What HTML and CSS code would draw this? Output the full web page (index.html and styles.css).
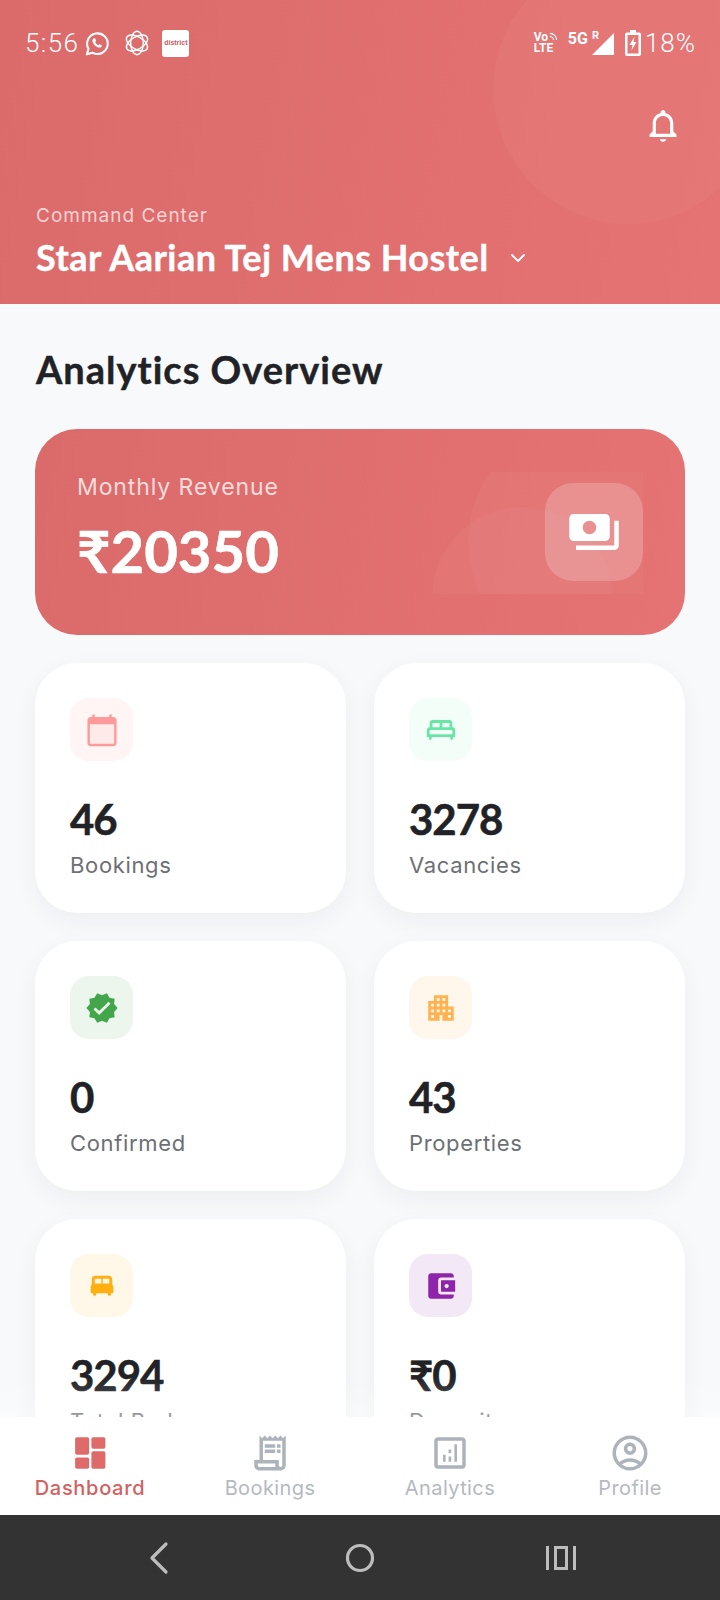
FILE: index.html
```html
<!DOCTYPE html>
<html lang="en">
<head>
    <meta charset="UTF-8">
    <meta name="viewport" content="width=device-width, initial-scale=1.0">
    <title>Dashboard</title>
    <link rel="stylesheet" href="styles.css">
</head>
<body>
    <div class="phone">
        <!-- Header -->
        <header class="header">
            <div class="header-circle"></div>
            <div class="status-bar">
                <div class="status-left">
                    <span class="time">5:56</span>
                    <svg class="ic-whatsapp" viewBox="0 0 24 24"><path d="M1.8 22.4l1.5-5.4a9.9 9.9 0 1 1 3.8 3.8z" fill="none" stroke="#fff" stroke-width="2" stroke-linejoin="round"/><path d="M8.9 6.9c-.4 0-1 .3-1.3.8-.6.9-.6 2.200.1 3.500 1 1.900 2.500 3.400 4.400 4.300 1.300.6 2.700.5 3.500-.2.500-.4.700-1 .7-1.500l-2.300-1.200-1.100 1.100c-1.400-.5-2.600-1.700-3.200-3.100l1-1.100-1-2.600z" fill="#fff"/></svg>
                    <svg class="ic-knot" viewBox="0 0 24 24" fill="none" stroke="#fff" stroke-width="1.300"><ellipse cx="12" cy="12" rx="5.800" ry="10.800"/><ellipse cx="12" cy="12" rx="5.800" ry="10.800" transform="rotate(60 12 12)"/><ellipse cx="12" cy="12" rx="5.800" ry="10.800" transform="rotate(120 12 12)"/></svg>
                    <span class="app-tile">district</span>
                </div>
                <div class="status-right">
                    <span class="volte">Vo<svg class="ic-arcs" viewBox="0 0 10 10"><path d="M1 1.500a7.500 7.500 0 0 1 7.500 7.500M1 5a4 4 0 0 1 4 4" fill="none" stroke="#fff" stroke-width="1.300"/></svg><br>LTE</span>
                    <span class="net">5G</span>
                    <span class="roam">R</span>
                    <svg class="ic-signal" viewBox="0 0 22 22"><path d="M22 0v22H0z" fill="#fff"/></svg>
                    <svg class="ic-battery" viewBox="0 0 16 26"><path d="M5 0h6v2.500h3a2 2 0 0 1 2 2V24a2 2 0 0 1-2 2H2a2 2 0 0 1-2-2V4.500a2 2 0 0 1 2-2h3zM2.500 5v18.500h11V5z" fill="#fff" fill-rule="evenodd"/><path d="M9.500 6.500L4.500 15h3l-1 5.500 5-8.500h-3z" fill="#fff"/></svg>
                    <span class="battery-pct">18%</span>
                </div>
            </div>
            <div class="bell-row">
                <svg class="ic-bell" viewBox="0 0 24 24"><path d="M12 22.500c1.100 0 2-.7 2-1.500h-4c0 .8.900 1.500 2 1.500zm6.500-6.500v-5c0-3.100-1.700-5.700-5-6.400V4c0-.8-.7-1.500-1.500-1.500s-1.500.7-1.500 1.500v.6c-3.300.7-5 3.300-5 6.400v5L3.500 18v1.500h17V18zm-2 1.500h-9V11c0-2.600 1.800-4.700 4.500-4.700s4.500 2.100 4.500 4.700z" fill="#fff"/></svg>
            </div>
            <div class="header-sub">Command Center</div>
            <div class="header-title-row">
                <h1 class="header-title">Star Aarian Tej Mens Hostel</h1>
                <svg class="ic-chevron" viewBox="0 0 16 10"><path d="M2 2l6 6 6-6" fill="none" stroke="#fff" stroke-width="1.800" stroke-linecap="round" stroke-linejoin="round"/></svg>
            </div>
        </header>

        <!-- Contenido -->
        <main class="content">
            <h2 class="section-title">Analytics Overview</h2>

            <div class="revenue-card">
                <div class="revenue-text">
                    <div class="revenue-label">Monthly Revenue</div>
                    <div class="revenue-value">₹20350</div>
                </div>
                <div class="revenue-deco">
                    <div class="deco-circle deco-one"></div>
                    <div class="deco-circle deco-two"></div>
                </div>
                <div class="revenue-icon">
                    <svg viewBox="0 0 24 24"><path d="M19 14V6c0-1.100-.9-2-2-2H3c-1.100 0-2 .9-2 2v8c0 1.100.9 2 2 2h14c1.100 0 2-.9 2-2zm-9-1c-1.660 0-3-1.340-3-3s1.340-3 3-3 3 1.340 3 3-1.340 3-3 3zm13-6v11c0 1.100-.9 2-2 2H4v-2h17V7h2z" fill="#fff"/></svg>
                </div>
            </div>

            <div class="stats-grid">
                <div class="stat-card">
                    <div class="stat-icon bg-red">
                        <svg viewBox="1.500 1.500 21 21"><path d="M4 8h16v12.500H4z" fill="#ff9a9a" opacity=".12"/><path d="M19 4h-1V2.500h-1.500V4h-9V2.500H6V4H5c-1.100 0-2 .9-2 2v14c0 1.100.9 2 2 2h14c1.100 0 2-.9 2-2V6c0-1.100-.9-2-2-2zm.500 16.500h-15V8.500h15z" fill="#ff9a9a"/></svg>
                    </div>
                    <div class="stat-value">46</div>
                    <div class="stat-label">Bookings</div>
                </div>
                <div class="stat-card">
                    <div class="stat-icon bg-green">
                        <svg viewBox="0 0 24 24"><path d="M20 10V7c0-1.100-.9-2-2-2H6c-1.100 0-2 .9-2 2v3c-1.100 0-2 .9-2 2v5h1.330L4 19h1l.67-2h12.670l.66 2h1l.67-2H22v-5c0-1.100-.9-2-2-2zm-9 0H6V7h5v3zm7 0h-5V7h5v3zM4 12h16v3H4v-3z" fill="#69e6a6"/></svg>
                    </div>
                    <div class="stat-value">3278</div>
                    <div class="stat-label">Vacancies</div>
                </div>
                <div class="stat-card">
                    <div class="stat-icon bg-mint">
                        <svg viewBox="0 0 24 24"><path d="M23 12l-2.440-2.780.34-3.680-3.610-.82-1.890-3.180L12 3 8.600 1.540 6.710 4.720l-3.610.81.34 3.680L1 12l2.440 2.780-.34 3.690 3.610.82 1.890 3.180L12 21l3.400 1.460 1.890-3.180 3.610-.82-.34-3.680L23 12zm-13 5l-4-4 1.410-1.410L10 14.170l6.590-6.590L18 9l-8 8z" fill="#43a64a"/></svg>
                    </div>
                    <div class="stat-value">0</div>
                    <div class="stat-label">Confirmed</div>
                </div>
                <div class="stat-card">
                    <div class="stat-icon bg-orange">
                        <svg viewBox="0 0 24 24"><path d="M17 11V3H7v4H3v14h8v-4h2v4h8V11h-4zM7 19H5v-2h2v2zm0-4H5v-2h2v2zm0-4H5V9h2v2zm4 4H9v-2h2v2zm0-4H9V9h2v2zm0-4H9V5h2v2zm4 8h-2v-2h2v2zm0-4h-2V9h2v2zm0-4h-2V5h2v2zm4 12h-2v-2h2v2zm0-4h-2v-2h2v2z" fill="#ffb24d"/></svg>
                    </div>
                    <div class="stat-value">43</div>
                    <div class="stat-label">Properties</div>
                </div>
                <div class="stat-card">
                    <div class="stat-icon bg-yellow">
                        <svg viewBox="-3 -3 30 30"><path d="M21 10.800V6c0-1.650-1.350-3-3-3H6C4.350 3 3 4.350 3 6v4.800c-.6.5-1 1.300-1 2.200v4.500c0 .6.400 1 1 1h1l.5 2h2l.5-2h10l.5 2h2l.5-2h1c.6 0 1-.4 1-1V13c0-.9-.4-1.700-1-2.200zM6.500 5.500h4c.5 0 .9.400.9.900v3.400H5.600V6.400c0-.5.400-.9.900-.9zm7 0h4c.5 0 .9.400.9.900v3.400h-5.800V6.400c0-.5.400-.9.900-.9z" fill="#ffb010" fill-rule="evenodd"/></svg>
                    </div>
                    <div class="stat-value">3294</div>
                    <div class="stat-label">Total Beds</div>
                </div>
                <div class="stat-card">
                    <div class="stat-icon bg-purple">
                        <svg viewBox="0 0 24 24"><path d="M21 18v1c0 1.100-.9 2-2 2H5c-1.110 0-2-.9-2-2V5c0-1.100.89-2 2-2h14c1.100 0 2 .9 2 2v1h-9c-1.110 0-2 .9-2 2v8c0 1.100.89 2 2 2h9zm-9-2h10V8H12v8zm4-2.500c-.83 0-1.500-.67-1.500-1.500s.67-1.500 1.500-1.500 1.500.67 1.500 1.500-.67 1.500-1.500 1.500z" fill="#8e24aa"/></svg>
                    </div>
                    <div class="stat-value">₹0</div>
                    <div class="stat-label">Deposit</div>
                </div>
            </div>
            <div class="content-fade"></div>
        </main>

        <!-- Barra inferior -->
        <nav class="tabbar">
            <div class="tab active">
                <svg viewBox="0 0 24 24"><rect x="3.500" y="3" width="8" height="10" rx="1"/><rect x="3.500" y="14.500" width="8" height="6.500" rx="1"/><rect x="12.800" y="3" width="8" height="6.500" rx="1"/><rect x="12.800" y="11" width="8" height="10" rx="1"/></svg>
                <span>Dashboard</span>
            </div>
            <div class="tab">
                <svg viewBox="0 0 24 24"><path d="M19.500 3.500L18 2l-1.500 1.500L15 2l-1.500 1.500L12 2l-1.500 1.500L9 2 7.500 3.500 6 2v14H3v3c0 1.660 1.340 3 3 3h12c1.660 0 3-1.340 3-3V2l-1.500 1.500zM15 20H6c-.55 0-1-.45-1-1v-1h10v2zm4-1c0 .55-.45 1-1 1s-1-.45-1-1v-3H8V5h11v14z"/><path d="M9 7h6v2H9zm7 0h2v2h-2zm-7 3h6v2H9zm7 0h2v2h-2z"/></svg>
                <span>Bookings</span>
            </div>
            <div class="tab">
                <svg viewBox="0 0 24 24"><path d="M19 3H5c-1.100 0-2 .9-2 2v14c0 1.100.9 2 2 2h14c1.100 0 2-.9 2-2V5c0-1.100-.9-2-2-2zm0 16H5V5h14v14z"/><path d="M8 13h1.500v4H8zm6.500-6H16v10h-1.500zm-3.300 7h1.500v3h-1.500zm0-4h1.500v2h-1.500z"/></svg>
                <span>Analytics</span>
            </div>
            <div class="tab">
                <svg viewBox="0 0 24 24"><path d="M12 2C6.480 2 2 6.480 2 12s4.480 10 10 10 10-4.480 10-10S17.520 2 12 2zM7.350 18.500C8.660 17.560 10.260 17 12 17s3.340.56 4.650 1.500c-1.310.94-2.910 1.500-4.650 1.500s-3.340-.56-4.650-1.500zm10.790-1.380C16.450 15.800 14.320 15 12 15s-4.450.8-6.140 2.120C4.700 15.730 4 13.950 4 12c0-4.420 3.580-8 8-8s8 3.580 8 8c0 1.950-.7 3.730-1.860 5.120z"/><path d="M12 6c-1.930 0-3.500 1.570-3.500 3.500S10.070 13 12 13s3.500-1.570 3.500-3.500S13.930 6 12 6zm0 5c-.83 0-1.500-.67-1.500-1.500S11.170 8 12 8s1.500.67 1.500 1.500S12.830 11 12 11z"/></svg>
                <span>Profile</span>
            </div>
        </nav>

        <!-- Navegación del sistema -->
        <div class="sysnav">
            <svg class="sys-back" viewBox="0 0 20 36"><path d="M17 4L3 18l14 14" fill="none" stroke="#bdbdbd" stroke-width="3.200" stroke-linecap="round" stroke-linejoin="round"/></svg>
            <svg class="sys-home" viewBox="0 0 30 30"><circle cx="15" cy="15" r="12.500" fill="none" stroke="#bdbdbd" stroke-width="3.200"/></svg>
            <svg class="sys-recent" viewBox="0 0 30 26"><path d="M1.500 1v24M28.500 1v24" stroke="#bdbdbd" stroke-width="3"/><rect x="9.500" y="2.500" width="11" height="21" fill="none" stroke="#bdbdbd" stroke-width="3"/></svg>
        </div>
    </div>
</body>
</html>
```

FILE: styles.css
```css
* {
    box-sizing: border-box;
}

body {
    margin: 0;
    font-family: 'Lato', sans-serif;
    background-color: #f8f9fb;
}

.phone {
    width: 720px;
    height: 1600px;
    display: flex;
    flex-direction: column;
    overflow: hidden;
}

/* Header */
.header {
    position: relative;
    height: 304px;
    flex-shrink: 0;
    overflow: hidden;
    padding: 0 24px 0 36px;
    background: linear-gradient(100deg, #db6a6a, #e57373);
    color: #fff;
}

.header-circle {
    position: absolute;
    left: 493px;
    top: -46px;
    width: 270px;
    height: 270px;
    border-radius: 50%;
    background-color: rgba(255, 255, 255, 0.035);
}

.status-bar {
    position: relative;
    display: flex;
    justify-content: space-between;
    align-items: center;
    height: 30px;
    margin: 28px 0 0 -11px;
}

.status-left, .status-right {
    display: flex;
    align-items: center;
}

.time {
    font-family: 'Roboto', sans-serif;
    font-size: 26px;
    font-weight: 300;
    letter-spacing: 1.4px;
    color: #fff;
}

.ic-whatsapp {
    width: 25px;
    height: 25px;
    margin-left: 6px;
}

.ic-knot {
    width: 26px;
    height: 26px;
    margin-left: 14px;
}

.app-tile {
    width: 27px;
    height: 27px;
    margin-left: 12px;
    border-radius: 3px;
    background-color: #fff;
    color: #d9575f;
    font-family: 'Liberation Sans', sans-serif;
    font-size: 7px;
    font-weight: 700;
    line-height: 25px;
    text-align: center;
}

.volte {
    font-family: 'Roboto', sans-serif;
    font-size: 12px;
    font-weight: 700;
    line-height: 11px;
    width: 34px;
}

.ic-arcs {
    width: 9px;
    height: 9px;
    margin-left: 1px;
}

.net {
    font-family: 'Roboto', sans-serif;
    font-size: 16px;
    font-weight: 700;
    margin-top: -9px;
}

.roam {
    font-family: 'Roboto', sans-serif;
    font-size: 11px;
    font-weight: 700;
    margin: -16px -7px 0 4px;
}

.ic-signal {
    width: 22px;
    height: 22px;
    margin-top: 1px;
}

.ic-battery {
    width: 16px;
    height: 26px;
    margin-left: 11px;
}

.battery-pct {
    font-family: 'Roboto', sans-serif;
    font-size: 26px;
    font-weight: 300;
    letter-spacing: 1px;
    color: #fff;
    margin-left: 4px;
}

.bell-row {
    position: relative;
    display: flex;
    justify-content: flex-end;
    margin-top: 48px;
}

.ic-bell {
    width: 38px;
    height: 38px;
    margin-right: 14px;
}

.header-sub {
    margin-top: 60px;
    font-family: 'Inter', sans-serif;
    font-size: 19px;
    line-height: 24px;
    letter-spacing: 1px;
    color: #f9d3d3;
}

.header-title-row {
    display: flex;
    align-items: center;
    margin-top: 7px;
}

.header-title {
    margin: 0;
    font-size: 36px;
    line-height: 44px;
    font-weight: 700;
    letter-spacing: 0.47px;
    -webkit-text-stroke: 0.4px #fff;
}

.ic-chevron {
    width: 16px;
    height: 10px;
    margin: 2px 0 0 21px;
}

/* Contenido */
.content {
    position: relative;
    flex: 1;
    min-height: 0;
    overflow: hidden;
    padding: 42px 35px 0;
    background-color: #f8f9fb;
}

.section-title {
    margin: 0 0 37px 1px;
    font-size: 38px;
    line-height: 46px;
    font-weight: 700;
    letter-spacing: 1px;
    color: #212226;
    -webkit-text-stroke: 0.4px #212226;
}

.revenue-card {
    position: relative;
    display: flex;
    justify-content: space-between;
    height: 206px;
    padding: 44px 42px;
    border-radius: 42px;
    background: linear-gradient(100deg, #db6a6a, #e57373);
    color: #fff;
}

.revenue-label {
    font-family: 'Inter', sans-serif;
    font-size: 23px;
    line-height: 28px;
    letter-spacing: 0.9px;
    color: #fbdcdc;
}

.revenue-value {
    margin-top: 17px;
    font-size: 58px;
    line-height: 66px;
    font-weight: 700;
    -webkit-text-stroke: 0.6px #fff;
}

.revenue-deco {
    position: absolute;
    left: 397px;
    top: 43px;
    width: 211px;
    height: 122px;
    overflow: hidden;
}

.deco-circle {
    position: absolute;
    border-radius: 50%;
    background-color: rgba(255, 255, 255, 0.035);
}

.deco-one {
    left: 36px;
    top: -50px;
    width: 240px;
    height: 240px;
}

.deco-two {
    left: 0;
    top: 35px;
    width: 180px;
    height: 180px;
}

.revenue-icon {
    position: relative;
    display: flex;
    align-items: center;
    justify-content: center;
    width: 98px;
    height: 98px;
    margin-top: 10px;
    border-radius: 28px;
    background-color: rgba(255, 255, 255, 0.2);
}

.revenue-icon svg {
    width: 54px;
    height: 54px;
}

.stats-grid {
    display: grid;
    grid-template-columns: 311px 311px;
    grid-auto-rows: 250px;
    gap: 28px;
    margin-top: 28px;
}

.stat-card {
    padding: 35px;
    border-radius: 42px;
    background-color: #fff;
    box-shadow: 0 8px 24px rgba(30, 40, 60, 0.05);
}

.stat-icon {
    display: flex;
    align-items: center;
    justify-content: center;
    width: 63px;
    height: 63px;
    border-radius: 19px;
}

.stat-icon svg {
    width: 34px;
    height: 34px;
}

.bg-red { background-color: #fff5f5; }
.bg-green { background-color: #f4fef9; }
.bg-mint { background-color: #ecf6ed; }
.bg-orange { background-color: #fff7ec; }
.bg-yellow { background-color: #fff8e8; }
.bg-purple { background-color: #f3e8f6; }

.stat-value {
    margin-top: 32px;
    font-size: 42px;
    line-height: 52px;
    font-weight: 700;
    letter-spacing: -1px;
    color: #212226;
    -webkit-text-stroke: 0.5px #212226;
}

.stat-label {
    margin-top: 6px;
    font-family: 'Inter', sans-serif;
    font-size: 22px;
    line-height: 28px;
    letter-spacing: 0.65px;
    color: #6d6f75;
}

.content-fade {
    position: absolute;
    left: 0;
    right: 0;
    bottom: 0;
    height: 40px;
    background: linear-gradient(to bottom, rgba(255, 255, 255, 0), rgba(255, 255, 255, 0.3));
}

/* Barra inferior */
.tabbar {
    display: grid;
    grid-template-columns: repeat(4, 1fr);
    height: 98px;
    flex-shrink: 0;
    padding-top: 15px;
    background-color: #fff;
}

.tab {
    display: flex;
    flex-direction: column;
    align-items: center;
    color: #b5b9bf;
    font-family: 'Inter', sans-serif;
    font-size: 20px;
}

.tab svg {
    width: 42px;
    height: 42px;
    fill: #acb3ba;
}

.tab span {
    line-height: 28px;
    letter-spacing: 0.4px;
}

.tab.active {
    color: #d55f60;
    font-weight: 500;
}

.tab.active span {
    letter-spacing: 0.7px;
}

.tab.active svg {
    fill: #df6a6a;
}

/* Navegación del sistema */
.sysnav {
    display: flex;
    align-items: center;
    justify-content: space-between;
    height: 85px;
    flex-shrink: 0;
    padding: 0 144px 0 149px;
    background-color: #333333;
}

.sys-back {
    width: 20px;
    height: 36px;
}

.sys-home {
    width: 30px;
    height: 30px;
    margin-left: 4px;
}

.sys-recent {
    width: 30px;
    height: 26px;
}
```
